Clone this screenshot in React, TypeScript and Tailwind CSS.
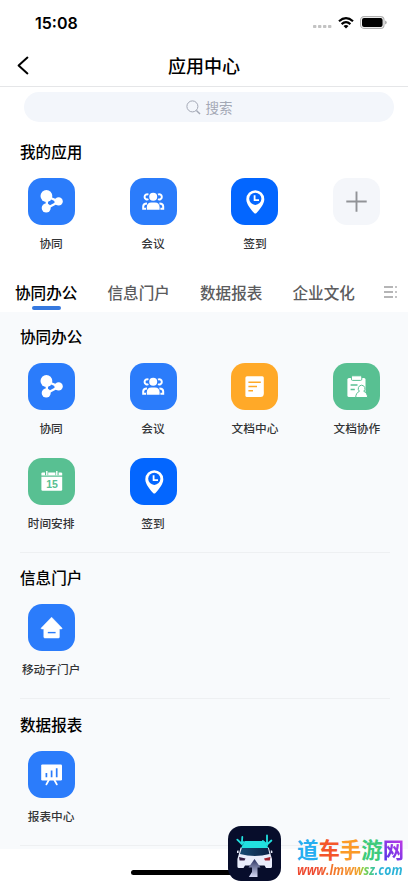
import type { ReactNode } from "react";
import clsx from "clsx";

const glyphs: Record<string, ReactNode> = {
  collab: (
    <>
      <path d="M19 18.5L31 23.7L18.7 30.3Z" fill="none" stroke="#fff" strokeWidth="2.4" />
      <circle cx="18.4" cy="18" r="5.9" fill="#fff" />
      <circle cx="30.6" cy="23.4" r="4.2" fill="#fff" />
      <circle cx="18.2" cy="30" r="4.5" fill="#fff" />
    </>
  ),
  meeting: (
    <>
      <g fill="none" stroke="#fff" strokeWidth="2" strokeLinecap="butt">
        <path d="M18.4 16.6A2.6 2.6 0 1 0 18.4 21.2" />
        <path d="M28 16.6A2.6 2.6 0 1 1 28 21.2" />
        <path d="M16 30.8H13.2V28.4Q13.2 25.6 17 25.6" />
        <path d="M30.4 30.8H33.2V28.4Q33.2 25.6 29.4 25.6" />
      </g>
      <circle cx="23.2" cy="18.8" r="4" fill="#fff" />
      <path d="M16.8 31.8V29.2Q16.8 24.4 21.4 24.4H25Q29.6 24.4 29.6 29.2V31.8Z" fill="#fff" />
    </>
  ),
  checkin: (
    <>
      <path d="M24.3 12.2A9 9 0 0 0 15.3 21.2C15.3 26.4 20.2 31.6 23.1 35Q24.3 36.2 25.5 35C28.4 31.6 33.3 26.4 33.3 21.2A9 9 0 0 0 24.3 12.2Z" fill="#fff" />
      <circle cx="24.3" cy="20.8" r="6.1" fill="#0366ff" />
      <path d="M23.6 17.3V22.2H28" fill="none" stroke="#fff" strokeWidth="1.8" />
    </>
  ),
  doc: (
    <>
      <path d="M16 13.3H31.3Q32.8 13.3 32.8 14.8V28.8L28 34H16Q14.4 34 14.4 32.4V14.9Q14.4 13.3 16 13.3Z" fill="#fff" />
      <path d="M17.4 19.2H29.8M17.4 23.5H26M17.4 27.8H22" stroke="#ffa928" strokeWidth="1.5" />
      <path d="M28 34Q27.8 29 32.8 28.8V30.5Q32.8 34 29.5 34Z" fill="#fff" />
    </>
  ),
  teamDoc: (
    <>
      <path d="M16 15H31Q32.5 15 32.5 16.5V34H16Q14.4 34 14.4 32.4V16.6Q14.4 15 16 15Z" fill="#fff" />
      <rect x="18.4" y="12.8" width="10.4" height="4.6" rx="1.2" fill="#fff" stroke="#58c092" strokeWidth="1" />
      <path d="M17.6 22H24.5M17.6 26.6H21.8" stroke="#58c092" strokeWidth="1.5" />
      <path
        d="M28.6 22.2A3.5 3.5 0 0 0 26.4 28.3C24 29.3 22.8 31.6 22.7 34.5H34.6C34.5 31.6 33.2 29.3 30.8 28.3A3.5 3.5 0 0 0 28.6 22.2Z"
        fill="#fff"
        stroke="#58c092"
        strokeWidth="1"
      />
    </>
  ),
  calendar: (
    <>
      <path d="M14.6 14.4H33Q34.2 14.4 34.2 15.6V17.6H13.4V15.6Q13.4 14.4 14.6 14.4Z" fill="#fff" />
      <path d="M13.4 18.8H34.2V31.6Q34.2 32.8 33 32.8H14.6Q13.4 32.8 13.4 31.6Z" fill="#fff" />
      <path d="M18.6 13V17.2M29 13V17.2" stroke="#58c092" strokeWidth="3.2" />
      <path d="M18.8 13V17.2M28.8 13V17.2" stroke="#fff" strokeWidth="1.4" />
      <text x="24" y="29.7" textAnchor="middle" fontSize="10.5" fontWeight="700" fill="#58c092" className="font-['Liberation_Sans',sans-serif]">
        15
      </text>
    </>
  ),
  home: (
    <>
      <path d="M23.6 13.2L34.2 24.2Q34.1 25 33.2 25H31.4V33Q31.4 34 30.4 34H16.8Q15.8 34 15.8 33V25H14.1Q13.1 25 13 24.2Z" fill="#fff" stroke="#fff" strokeWidth=".5" strokeLinejoin="round" />
      <path d="M19.8 28.6H27.6" stroke="#2b7cfb" strokeWidth="1.4" />
    </>
  ),
  report: (
    <>
      <rect x="13.2" y="13.4" width="20.8" height="16" rx="1.2" fill="#fff" />
      <path d="M20.8 29L18.4 33.4M26.4 29L28.8 33.4" stroke="#fff" strokeWidth="1.8" strokeLinecap="round" />
      <path d="M18.4 22V26.2M23.6 19.6V26.2M28.7 17.2V26.2" stroke="#2b7cfb" strokeWidth="1.7" />
    </>
  ),
  add: <path d="M23.5 13.4V33.8M13.3 23.5H33.7" stroke="#919397" strokeWidth="1.9" />,
};

type AppItem = { label: string; icon: string; bg: string };

const collab: AppItem = { label: "协同", icon: "collab", bg: "bg-[#2b7cfb]" };
const meeting: AppItem = { label: "会议", icon: "meeting", bg: "bg-[#2b7cfb]" };
const checkin: AppItem = { label: "签到", icon: "checkin", bg: "bg-[#0366ff]" };

const myApps: AppItem[] = [collab, meeting, checkin, { label: "", icon: "add", bg: "bg-[#f4f6fa]" }];

const sections = [
  {
    title: "协同办公",
    items: [
      collab,
      meeting,
      { label: "文档中心", icon: "doc", bg: "bg-[#ffa928]" },
      { label: "文档协作", icon: "teamDoc", bg: "bg-[#58c092]" },
      { label: "时间安排", icon: "calendar", bg: "bg-[#58c092]" },
      checkin,
    ],
  },
  { title: "信息门户", items: [{ label: "移动子门户", icon: "home", bg: "bg-[#2b7cfb]" }] },
  { title: "数据报表", items: [{ label: "报表中心", icon: "report", bg: "bg-[#2b7cfb]" }] },
];

function AppGrid({ items }: { items: AppItem[] }) {
  return (
    <div className="grid w-[407.85px] grid-cols-4 gap-y-[19.6px] pl-[0.15px]">
      {items.map((it) => (
        <div key={it.icon} className="flex h-[75px] flex-col items-center">
          <div className={clsx("h-[47px] w-[47px] shrink-0 rounded-[14px]", it.bg)}>
            <svg viewBox="0 0 47 47" className="h-full w-full">{glyphs[it.icon]}</svg>
          </div>
          <span className="mt-[9px] text-[11.7px] leading-[18px] font-medium text-[#333436]">{it.label}</span>
        </div>
      ))}
    </div>
  );
}

function SectionTitle({ children }: { children: ReactNode }) {
  return <h2 className="pl-5 text-[15.6px] leading-6 font-medium text-black">{children}</h2>;
}

function StatusBar() {
  return (
    <div className="flex h-11 items-center justify-between pr-[21px] pl-[35px]">
      <span className="pt-[2px] font-[Inter,sans-serif] text-[16px] font-semibold text-black">15:08</span>
      <div className="flex items-center">
        <svg viewBox="0 0 19 4" className="mt-[9px] mr-[6px] h-1 w-[19px]" fill="#c3c3c3">
          <rect x="0" y="0" width="3.4" height="3" rx=".8" />
          <rect x="5" y="0" width="3.4" height="3" rx=".8" />
          <rect x="10" y="0" width="3.4" height="3" rx=".8" />
          <rect x="15" y="0" width="3.4" height="3" rx=".8" />
        </svg>
        <svg viewBox="0 0 16 12" className="mt-px h-3 w-4" fill="none" stroke="#000" strokeWidth="2.2">
          <path d="M1 4.3Q8 -1.9 15 4.3" />
          <path d="M3.6 7.1Q8 3.3 12.4 7.1" />
          <path d="M5.5 9Q8 7.1 10.5 9L8 11.6Z" fill="#000" stroke="none" />
        </svg>
        <svg viewBox="0 0 27 13" className="ml-[6px] h-[13px] w-[27px]">
          <rect x=".6" y=".6" width="23.4" height="11.8" rx="3.4" fill="none" stroke="#b0b0b0" strokeWidth="1.1" />
          <rect x="2" y="2" width="20.6" height="9" rx="2" fill="#000" />
          <path d="M25 4.4Q26.8 5 26.8 6.5Q26.8 8 25 8.6Z" fill="#b0b0b0" />
        </svg>
      </div>
    </div>
  );
}

function TabBar() {
  const tabs = ["协同办公", "信息门户", "数据报表", "企业文化"];
  return (
    <div className="flex h-[42px] pl-[15px]">
      {tabs.map((t, i) => (
        <div key={t} className="flex w-[92.5px] shrink-0 flex-col items-start">
          <span
            className={clsx(
              "mt-[10px] text-[15.6px] leading-6 font-medium whitespace-nowrap",
              i === 0 ? "text-black" : "text-[#5c5c5e]"
            )}
          >
            {t}
          </span>
          {i === 0 && <span className="mt-[2px] ml-[17px] h-1 w-[29px] rounded-sm bg-[#3679df]" />}
        </div>
      ))}
      <svg viewBox="0 0 14 12" className="-ml-[1px] mt-[16px] h-3 w-[14px] shrink-0" stroke="#6c6c6e" strokeWidth="1.1">
        <path d="M0 1H9M0 6H9M0 11H9M11.2 1H12.8M11.2 6H12.8M11.2 11H12.8" />
      </svg>
    </div>
  );
}

function CarBadge() {
  return (
    <svg viewBox="0 0 53 55" className="h-[55px] w-[53px] shrink-0">
      <defs>
        <linearGradient id="glass" x1="0" y1="0" x2="1" y2="0">
          <stop offset="0" stopColor="#154b73" />
          <stop offset="1" stopColor="#0d2044" />
        </linearGradient>
        <linearGradient id="road" x1="0" y1="0" x2="0" y2="1">
          <stop offset="0" stopColor="#27305f" />
          <stop offset="1" stopColor="#d5d9f4" />
        </linearGradient>
      </defs>
      <rect width="53" height="55" rx="13" fill="#070d2b" />
      <path d="M17 15H36L40.5 22H13Z" fill="#22e0df" />
      <path d="M13.5 22H40L42 29Q27 33 11.5 29Z" fill="url(#glass)" />
      <path d="M12.6 21.5L10.6 29L9.4 33V40.5Q9.4 42 11 42H15.5L17 39.5H36.5L38 42H42.5Q44 42 44 40.5V33L42.8 29L40.8 21.5L40 22L41.4 28Q27 32 12 28L13.8 22Z" fill="#e9edfb" />
      <path d="M9 25.5Q9 24 10.6 24.6V27H9ZM44.4 25.5Q44.4 24 42.8 24.6V27H44.4Z" fill="#e9edfb" />
      <path d="M11 31L17.5 32.5L16.5 34.5H11.6Z" fill="#341f43" />
      <path d="M42.4 31L36 32.5L37 34.5H41.8Z" fill="#a4232f" />
      <path d="M26.5 33L32.5 41.5H29.5V51H24V41.5H20.5Z" fill="url(#road)" />
      <path d="M24 46V51H20.8Z" fill="#cbd0ef" />
      <g fill="none" stroke="#22e0df" strokeWidth="1.8" strokeLinecap="round">
        <path d="M14.3 11L13.8 18L9.3 13.6M13.8 18L16 16" />
        <path d="M39 9.5V18.5L34.8 15M39 18.5L43.4 14.5" />
      </g>
    </svg>
  );
}

function Watermark() {
  return (
    <div className="absolute top-[826px] left-[228px] flex">
      <CarBadge />
      <div className="ml-4 flex flex-col items-start">
        <div className="mt-[9px] flex text-[21.4px] leading-[28px] font-bold">
          <span className="text-[#26aef0]">道</span>
          <span className="text-[#f4562a]">车</span>
          <span className="text-[#fb9a27]">手</span>
          <span className="text-[#3fcb7c]">游</span>
          <span className="bg-[linear-gradient(45deg,#4a35e8,#d03be4)] bg-clip-text text-transparent">网</span>
        </div>
        <span className="-mt-[3px] w-[126px] origin-left scale-x-[0.845] bg-[linear-gradient(90deg,#ee4a30_20%,#f2702b_30%,#f5942b_52%,#f0a52b_58%,#8fd13f_62%,#45c98a_70%,#2bb3d8_76%)] bg-clip-text font-['Open_Sans',sans-serif] text-[14.5px] leading-5 font-bold whitespace-nowrap text-transparent italic">
          www.lmwwsz.com
        </span>
      </div>
    </div>
  );
}

export default function App() {
  return (
    <div className="relative flex h-[883px] w-[408px] flex-col overflow-hidden bg-white font-['Noto_Sans_CJK_SC',sans-serif]">
      <StatusBar />
      <header className="flex h-[43px] items-center border-b border-[#e5e6e8]">
        <svg viewBox="0 0 12 19" className="ml-[17px] h-[19px] w-3" fill="none" stroke="#000" strokeWidth="2" strokeLinecap="round" strokeLinejoin="round">
          <path d="M10.4 1.6L1.6 9.5L10.4 17.4" />
        </svg>
        <h1 className="flex-1 pr-[29px] text-center text-[18px] leading-6 font-medium text-black">应用中心</h1>
      </header>

      <div className="mt-[5px] mr-[14px] ml-6 flex h-[30px] shrink-0 items-center justify-center gap-[5px] rounded-full bg-[#f3f6fb]">
        <svg viewBox="0 0 15 15" className="h-[15px] w-[15px]" fill="none" stroke="#a3a8b5" strokeWidth="1">
          <circle cx="6.4" cy="6.4" r="5.5" />
          <path d="M10.4 10.4L14 14" strokeWidth="1.4" />
        </svg>
        <span className="text-[13.5px] leading-5 text-[#a3a8b5]">搜索</span>
      </div>

      <section className="mt-[17px] flex h-[131px] shrink-0 flex-col gap-[15px]">
        <SectionTitle>我的应用</SectionTitle>
        <AppGrid items={myApps} />
      </section>

      <TabBar />

      <main className="h-[537px] shrink-0 bg-[#f8fafc] pt-3">
        {sections.map((s) => (
          <section key={s.title} className="mb-[12.8px]">
            <SectionTitle>{s.title}</SectionTitle>
            <div className="mt-[15px]">
              <AppGrid items={s.items} />
            </div>
            <div className="mt-[19px] mr-[18px] ml-5 h-px bg-[#eef0f2]" />
          </section>
        ))}
      </main>

      <div className="mt-[21px] ml-[131px] h-[5px] w-[146px] shrink-0 rounded-full bg-black" />
      <Watermark />
    </div>
  );
}
